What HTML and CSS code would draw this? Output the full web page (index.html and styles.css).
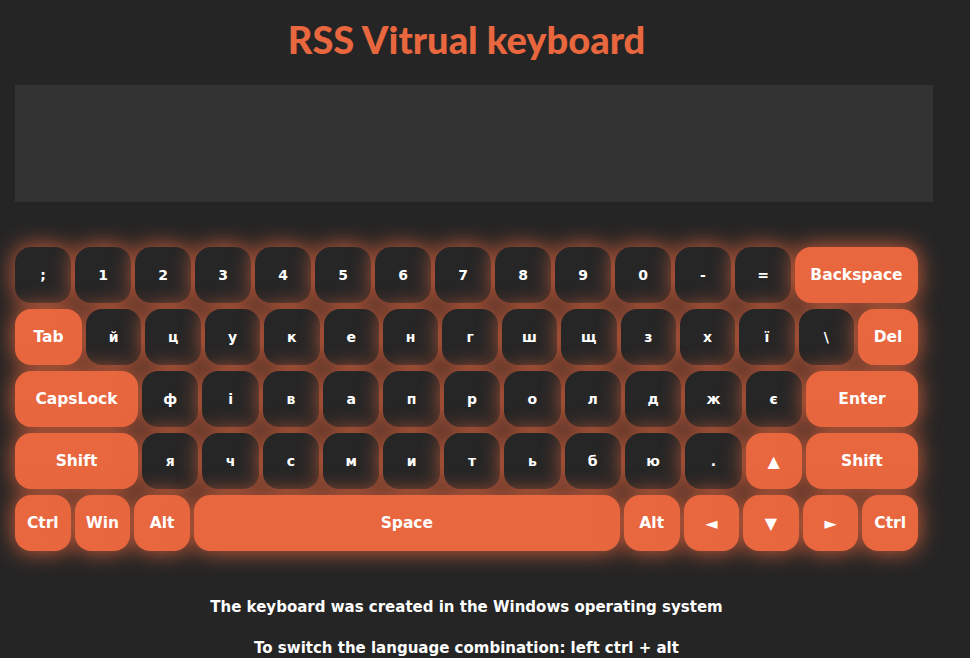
FILE: index.html
```html
<!DOCTYPE html>
<html lang="uk">
<head>
<meta charset="utf-8">
<title>RSS Vitrual keyboard</title>
<link rel="stylesheet" href="styles.css">
</head>
<body>
<main class="page">
  <h1 class="title">RSS Vitrual keyboard</h1>
  <textarea class="screen"></textarea>
  <div class="keyboard">
    <div class="row">
      <div class="key">;</div><div class="key">1</div><div class="key">2</div><div class="key">3</div><div class="key">4</div><div class="key">5</div><div class="key">6</div><div class="key">7</div><div class="key">8</div><div class="key">9</div><div class="key">0</div><div class="key">-</div><div class="key">=</div><div class="key fn backspace">Backspace</div>
    </div>
    <div class="row">
      <div class="key fn tab">Tab</div><div class="key">й</div><div class="key">ц</div><div class="key">у</div><div class="key">к</div><div class="key">е</div><div class="key">н</div><div class="key">г</div><div class="key">ш</div><div class="key">щ</div><div class="key">з</div><div class="key">х</div><div class="key">ї</div><div class="key">\</div><div class="key fn del">Del</div>
    </div>
    <div class="row">
      <div class="key fn caps">CapsLock</div><div class="key">ф</div><div class="key">і</div><div class="key">в</div><div class="key">а</div><div class="key">п</div><div class="key">р</div><div class="key">о</div><div class="key">л</div><div class="key">д</div><div class="key">ж</div><div class="key">є</div><div class="key fn enter">Enter</div>
    </div>
    <div class="row">
      <div class="key fn caps">Shift</div><div class="key">я</div><div class="key">ч</div><div class="key">с</div><div class="key">м</div><div class="key">и</div><div class="key">т</div><div class="key">ь</div><div class="key">б</div><div class="key">ю</div><div class="key">.</div><div class="key fn arrow">▲</div><div class="key fn enter">Shift</div>
    </div>
    <div class="row">
      <div class="key fn">Ctrl</div><div class="key fn">Win</div><div class="key fn">Alt</div><div class="key fn space">Space</div><div class="key fn">Alt</div><div class="key fn arrow">◄</div><div class="key fn arrow">▼</div><div class="key fn arrow">►</div><div class="key fn">Ctrl</div>
    </div>
  </div>
  <p class="note">The keyboard was created in the Windows operating system</p>
  <p class="note">To switch the language combination: left ctrl + alt</p>
</main>
</body>
</html>
```
FILE: styles.css
```css
* { box-sizing: border-box; }
html, body { margin: 0; padding: 0; }
body {
  background: #252525;
  font-family: "DejaVu Sans", "Lato", sans-serif;
  color: #fff;
  height: 658px;
  overflow: hidden;
}
.page {
  width: 903px;
  margin-left: 15px;
  display: flex;
  flex-direction: column;
}
.title {
  margin: 17px 0 0;
  height: 44px;
  line-height: 44px;
  font-family: "Lato", sans-serif;
  font-size: 38px;
  font-weight: 900;
  color: #e8673f;
  text-align: center;
}
.screen {
  margin-top: 24px;
  width: 918px;
  height: 117px;
  background: #333333;
  border: none;
  outline: none;
  resize: none;
  display: block;
}
.keyboard {
  margin-top: 45px;
  display: flex;
  flex-direction: column;
  gap: 6px;
}
.row {
  display: flex;
  gap: 4px;
  height: 56px;
}
.key {
  flex: 1 1 0;
  min-width: 0;
  height: 56px;
  border-radius: 16px;
  background: #262626;
  box-shadow: 0 0 22px 1px rgba(232, 103, 63, 0.85);
  display: flex;
  align-items: center;
  justify-content: center;
  font-size: 14px;
  font-weight: 700;
  color: #fff;
}
.key.fn { background: #e8673f; font-size: 15.5px; }
.backspace { flex: 0 0 123px; }
.tab { flex: 0 0 67px; }
.del { flex: 0 0 60px; }
.caps { flex: 0 0 123px; }
.enter { flex: 0 0 112px; }
.space { flex: 0 0 426px; }
.key.arrow { font-size: 16px; }
.note {
  margin: 0;
  text-align: center;
  font-size: 15px;
  font-weight: 700;
  line-height: 20px;
}
.note:first-of-type { margin-top: 46px; }
.note + .note { margin-top: 21px; }
```
